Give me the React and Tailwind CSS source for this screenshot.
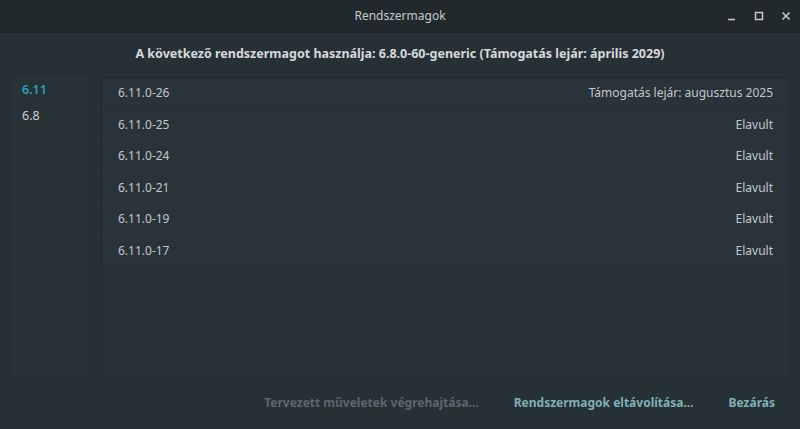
import { useState } from 'react';

const kernels = [
  { name: '6.11.0-26', status: 'Támogatás lejár: augusztus 2025' },
  { name: '6.11.0-25', status: 'Elavult' },
  { name: '6.11.0-24', status: 'Elavult' },
  { name: '6.11.0-21', status: 'Elavult' },
  { name: '6.11.0-19', status: 'Elavult' },
  { name: '6.11.0-17', status: 'Elavult' },
];

export default function App() {
  const [series, setSeries] = useState('6.11');

  return (
    <div
      className="w-[800px] h-[429px] flex flex-col bg-[#263136] text-[#c9ced1] overflow-hidden"
      style={{ fontFamily: '"Noto Sans", "Open Sans", sans-serif' }}
    >
      {/* fejléc */}
      <div className="h-[33px] shrink-0 flex items-center justify-center relative bg-[#21292d] border-b border-[#1d2427]">
        <span className="text-[12px] text-[#c5cacd]">Rendszermagok</span>
        <div className="absolute right-0 top-0 h-full flex items-center gap-[17px] pr-[9px]">
          <svg width="10" height="10" viewBox="0 0 10 10" className="text-[#c5cacd]">
            <path d="M1 8.5h7" stroke="currentColor" strokeWidth="1.6" />
          </svg>
          <svg width="10" height="10" viewBox="0 0 10 10" className="text-[#c5cacd]">
            <rect x="1.5" y="1.5" width="7" height="7" fill="none" stroke="currentColor" strokeWidth="1.5" />
          </svg>
          <svg width="10" height="10" viewBox="0 0 10 10" className="text-[#c5cacd]">
            <path d="M1.5 1.5l7 7M8.5 1.5l-7 7" stroke="currentColor" strokeWidth="1.6" />
          </svg>
        </div>
      </div>

      <div className="h-[39px] shrink-0 flex items-center justify-center pt-[3px]">
        <span className="text-[12.5px] font-bold text-[#d6d9db]">
          A következő rendszermagot használja: 6.8.0-60-generic (Támogatás lejár: április 2029)
        </span>
      </div>

      <div className="flex gap-[11px] px-[10px] h-[305px]">
        <div className="w-[80px] border border-[#222b2f] bg-[#273237] pt-[4px] flex flex-col">
          {['6.11', '6.8'].map((s) => (
            <button
              key={s}
              onClick={() => setSeries(s)}
              className={`text-left pl-[11px] h-[26px] text-[12.5px] ${series === s ? 'text-[#2aa1b7] font-semibold' : 'text-[#c9ced1]'}`}
            >
              {s}
            </button>
          ))}
        </div>

        <div className="flex-1 mt-[5px] border border-[#222b2f] bg-[#273237] flex flex-col">
          {kernels.map((k) => (
            <div
              key={k.name}
              className="h-[31.5px] flex items-center justify-between px-[16px] bg-[#28333a] border-b border-[#242d32] text-[12px] text-[#c3c8cb]"
            >
              <span>{k.name}</span>
              <span>{k.status}</span>
            </div>
          ))}
        </div>
      </div>

      <div className="flex-1 flex items-center justify-end gap-[35px] pr-[25px] text-[12px] font-bold">
        <span className="text-[#5b676d]">Tervezett műveletek végrehajtása...</span>
        <span className="text-[#7fb0b3]">Rendszermagok eltávolítása...</span>
        <span className="text-[#7fb0b3]">Bezárás</span>
      </div>
    </div>
  );
}
